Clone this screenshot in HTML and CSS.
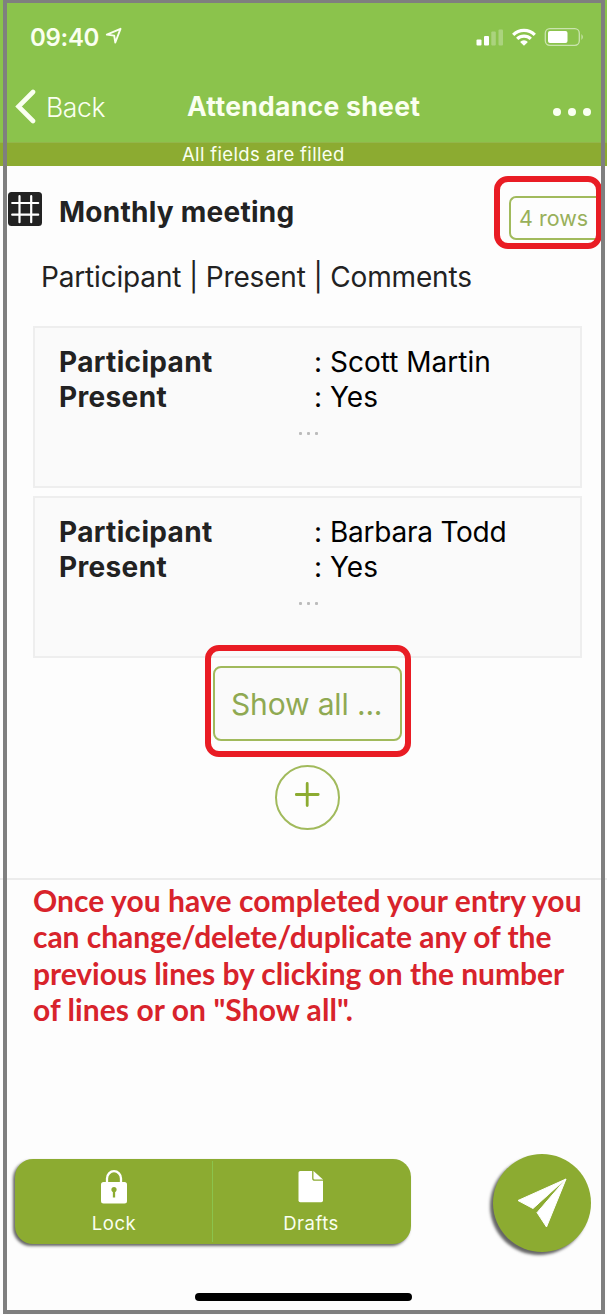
FILE: index.html
```html
<!DOCTYPE html>
<html lang="en">
<head>
<meta charset="utf-8">
<title>Attendance sheet</title>
<link rel="stylesheet" href="styles.css">
</head>
<body>
<div class="screen">
  <header class="header">
    <div class="status">
      <span class="time">09:40</span>
      <svg class="location" width="18" height="18" viewBox="0 0 18 18"><path d="M1.8 7.6 15.5 1.8 10.3 15.5 9.2 8.6Z" fill="none" stroke="#fafff0" stroke-width="1.9" stroke-linejoin="round"/></svg>
      <svg class="signals" width="110" height="22" viewBox="0 0 110 22" fill="#fff">
        <rect x="0.5" y="13.5" width="5" height="6" rx="1"/><rect x="8" y="10" width="5" height="9.5" rx="1"/>
        <g opacity=".28"><rect x="15.3" y="5.5" width="4.5" height="14" rx="1"/><rect x="22.5" y="3.5" width="4.5" height="16" rx="1"/></g>
        <g fill="none" stroke="#fff" stroke-width="3.2"><path d="M37.2 8.8a15.3 15.3 0 0 1 21.6 0"/><path d="M41.2 12.9a9.7 9.7 0 0 1 13.6 0"/></g>
        <path d="M48 19.7 44.1 16a5.4 5.4 0 0 1 7.8 0Z"/>
        <rect x="69.3" y="2.7" width="34" height="16.6" rx="4.5" fill="none" stroke="#fff" stroke-opacity=".55" stroke-width="1.3"/>
        <rect x="72" y="5" width="19.5" height="12" rx="2"/><path d="M105.5 8q2.5 3 0 6Z" opacity=".6"/>
      </svg>
    </div>
    <nav class="nav">
      <svg class="chevron" width="22" height="36" viewBox="0 0 22 36"><path d="M18 3 3.5 17.5 18 32" fill="none" stroke="#fafff0" stroke-width="4.6" stroke-linecap="round" stroke-linejoin="miter"/></svg>
      <span class="back">Back</span>
      <h1 class="title">Attendance sheet</h1>
      <span class="more"><i></i><i></i><i></i></span>
    </nav>
  </header>
  <div class="notice"><span>All fields are filled</span></div>
  <main class="content">
    <div class="section-head">
      <svg class="grid-icon" width="34" height="34" viewBox="0 0 34 34"><rect width="34" height="34" rx="3.5" fill="#222"/><path d="M11.5 4.2v26M23.2 4.2v26M4.2 11h26M4.2 22.7h26" stroke="#fff" stroke-width="2.2" stroke-linecap="round"/></svg>
      <h2 class="section-title">Monthly meeting</h2>
      <div class="rows-wrap"><button class="rows">4 rows</button><div class="mark mark-rows"></div></div>
    </div>
    <p class="columns">Participant | Present | Comments</p>
    <div class="cards">
      <section class="card">
        <dl class="fields"><dt>Participant</dt><dd>: <span>Scott Martin</span></dd><dt>Present</dt><dd>: <span>Yes</span></dd></dl>
        <div class="dots"><i></i><i></i><i></i></div>
      </section>
      <section class="card">
        <dl class="fields"><dt>Participant</dt><dd>: <span class="tight">Barbara Todd</span></dd><dt>Present</dt><dd>: <span>Yes</span></dd></dl>
        <div class="dots"><i></i><i></i><i></i></div>
      </section>
    </div>
    <div class="show-wrap"><button class="show">Show all ...</button><div class="mark mark-show"></div></div>
    <button class="add" aria-label="Add"><svg width="26" height="26" viewBox="0 0 26 26"><path d="M12.2 1.5v22M1.2 12.5h22" stroke="#8cab31" stroke-width="2.8" stroke-linecap="round"/></svg></button>
  </main>
  <section class="help">
    <p>Once you have completed your entry you<br><span class="help-tight">can change/delete/duplicate any of the<br>previous lines by clicking on the number</span><br>of lines or on "Show all".</p>
  </section>
  <footer class="footer">
    <div class="actions">
      <div class="action">
        <svg width="28" height="34" viewBox="0 0 28 34"><path d="M7 13V8.5a7 7.3 0 0 1 14 0V13" fill="none" stroke="#fff" stroke-width="2.3"/><rect x="1" y="12" width="26" height="21.5" rx="2.5" fill="#fff"/><circle cx="14" cy="19.5" r="2.6" fill="#8cab31"/><path d="M14 20v7.5" stroke="#8cab31" stroke-width="2.3"/></svg>
        <span>Lock</span>
      </div>
      <div class="action">
        <svg width="26" height="34" viewBox="0 0 26 34"><path d="M2.3 1H15.5L25 9.5V30.5q0 1.8-1.8 1.8H2.3q-1.8 0-1.8-1.8V2.8Q.5 1 2.3 1Z" fill="#fff"/><path d="M14.8.5V8.2q0 2 2 2H25.5" fill="none" stroke="#8cab31" stroke-width="1.3"/></svg>
        <span>Drafts</span>
      </div>
    </div>
    <button class="send" aria-label="Send"><svg width="50" height="50" viewBox="0 0 50 50" fill="#fff" stroke="#fff" stroke-width="1" stroke-linejoin="round"><path d="M1 22.5 49 1 16 30.5Z"/><path d="M49 1 29.5 49 20 34.5Z"/><path d="M16.8 30.8 42 7.5 20 33.8Z" fill="#8cab31" stroke="none"/></svg></button>
  </footer>
  <div class="home"></div>
  <div class="frame"></div>
</div>
</body>
</html>
```

FILE: styles.css
```css
* { box-sizing: border-box; margin: 0; padding: 0; }
body { background: #fdfdfd; font-family: Inter, "Liberation Sans", sans-serif; }
button { font-family: inherit; background: transparent; }
.screen { position: relative; width: 607px; height: 1315px; overflow: hidden; display: flex; flex-direction: column; }
.header { height: 142px; background: #8bc34c; color: #fafff0; padding-left: 15px; }
.status { height: 74px; display: flex; align-items: flex-start; padding: 26px 21px 0 15px; }
.time { font-size: 24px; line-height: 23px; font-weight: 600; width: 75px; letter-spacing: -.3px; white-space: nowrap; }
.location { margin-top: 1px; }
.signals { margin-left: auto; }
.nav { display: flex; height: 66px; }
.chevron { margin-top: 15px; }
.back { margin-left: 9px; width: 141px; font-size: 26.5px; line-height: 66px; font-weight: 350; letter-spacing: -.4px; }
.title { font-size: 26.5px; letter-spacing: .3px; line-height: 65px; font-weight: 700; white-space: nowrap; }
.more { margin-left: auto; padding: 34px 16px 0 0; display: flex; gap: 7px; }
.more i { width: 8px; height: 8px; border-radius: 50%; background: #fafff0; }
.notice { height: 24px; background: #8cab31; border-top: 1px solid #92b64a; color: #fafff0; padding-left: 182px; font-size: 18.5px; line-height: 22px; letter-spacing: .35px; font-weight: 400; white-space: nowrap; }
.content { height: 714px; border-bottom: 2px solid #ececec; padding: 26px 0 0 8px; color: #222; display: flex; flex-direction: column; flex: none; }
.section-head { display: flex; height: 64px; flex: none; }
.section-title { margin-left: 17px; font-size: 28px; letter-spacing: .25px; line-height: 40px; font-weight: 700; white-space: nowrap; }
.rows-wrap { position: relative; margin: 4px 10px 0 auto; width: 88px; height: 44px; flex: none; }
.rows { width: 88px; height: 44px; border: 2px solid #a1ba5c; border-right: 0; border-radius: 7px 0 0 7px; color: #98b05a; font-size: 21.5px; line-height: 40px; text-align: left; padding-left: 8px; white-space: nowrap; }
.mark { position: absolute; border: 6px solid #e91c24; border-radius: 14px; }
.mark-rows { left: -15px; top: -20px; width: 108px; height: 73px; }
.columns { margin-left: 33px; font-size: 28px; letter-spacing: -.17px; line-height: 42px; height: 42px; white-space: nowrap; }
.cards { margin: 28px 25px 0; display: flex; flex-direction: column; gap: 8px; flex: none; }
.card { height: 162px; border: 2px solid #eee; background: #fafafa; padding: 17px 0 0 24px; }
.fields { display: grid; grid-template-columns: 255px 1fr; grid-auto-rows: 35px; font-size: 28px; line-height: 35px; color: #000; white-space: nowrap; }
.fields dt { font-weight: 700; color: #222; letter-spacing: .35px; }
.fields dd { display: grid; grid-template-columns: 16px 1fr; }
.tight { letter-spacing: -.24px; }
.dots { display: flex; gap: 5px; margin: 17px 0 0 240px; }
.dots i { width: 3px; height: 3px; border-radius: 1px; background: #bbb; }
.show-wrap { position: relative; margin: 8px 0 0 205px; width: 189px; height: 75px; flex: none; }
.show { width: 189px; height: 75px; border: 2px solid #a1ba5c; border-radius: 8px; background: #fafafa; color: #8fa952; font-size: 30px; letter-spacing: -.15px; line-height: 71px; text-align: left; padding: 1px 0 0 16px; white-space: nowrap; }
.mark-show { left: -8px; top: -21px; width: 206px; height: 112px; }
.add { margin: 24px 0 0 267px; width: 65px; height: 65px; border: 2px solid #a1ba5c; border-radius: 50%; padding-bottom: 6px; display: flex; align-items: center; justify-content: center; }
.help { height: 274px; padding: 2px 0 0 33px; flex: none; }
.help p { font-family: Lato, sans-serif; font-weight: 700; font-size: 30px; letter-spacing: .07px; line-height: 36.4px; color: #d8232b; white-space: nowrap; }
.help-tight { letter-spacing: -.04px; }
.footer { height: 106px; display: flex; justify-content: space-between; padding: 0 16px 0 15px; flex: none; }
.actions { width: 396px; height: 85px; margin-top: 5px; border-radius: 18px; background: #8cab31; box-shadow: -2px 2px 3px #666; display: flex; padding: 2px 0; }
.action { flex: 1; display: flex; flex-direction: column; align-items: center; padding: 9px 0 0 1px; color: #fafff0; font-size: 18.5px; letter-spacing: .5px; line-height: 39px; }
.action svg { flex: none; }
.action + .action { border-left: 1px solid #8bc34c; padding: 9px 2px 0 0; }
.send { width: 98px; height: 98px; border: 0; border-radius: 50%; background: #8cab31; box-shadow: -3px 3px 3px #666; display: flex; align-items: center; justify-content: center; padding-right: 1px; }
.home { width: 217px; height: 8px; margin: 33px 0 0 195px; border-radius: 4px; background: #000; flex: none; }
.frame { position: absolute; inset: 0 2px 1px 3px; border: solid #7f7f7f; border-width: 3px 4px 4px; }
```
